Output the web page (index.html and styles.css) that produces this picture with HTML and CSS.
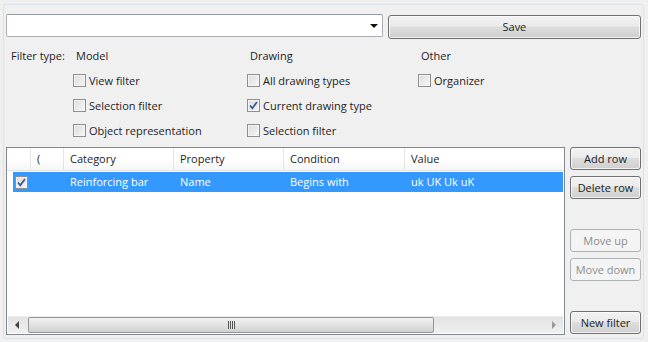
FILE: index.html
```html
<!DOCTYPE html>
<html>
<head>
<meta charset="utf-8">
<link rel="stylesheet" href="styles.css">
</head>
<body>
<div class="frame">
  <div class="toprow">
    <div class="combo"><span class="combo-arrow"></span></div>
    <button class="btn save">Save</button>
  </div>
  <div class="filters">
    <div class="lbl">Filter type:</div>
    <div class="hdr">Model</div>
    <div class="hdr">Drawing</div>
    <div class="hdr">Other</div>

    <div></div>
    <label class="chk"><span class="box"></span>View filter</label>
    <label class="chk"><span class="box"></span>All drawing types</label>
    <label class="chk"><span class="box"></span>Organizer</label>

    <div></div>
    <label class="chk"><span class="box"></span>Selection filter</label>
    <label class="chk"><span class="box checked"><svg viewBox="0 0 13 13" width="13" height="13"><path d="M3 6.5 L5.3 9.3 L10 3" fill="none" stroke="#3c5a9a" stroke-width="1.8"/></svg></span>Current drawing type</label>
    <div></div>

    <div></div>
    <label class="chk"><span class="box"></span>Object representation</label>
    <label class="chk"><span class="box"></span>Selection filter</label>
    <div></div>
  </div>
  <div class="main">
    <div class="table">
      <div class="thead">
        <div class="th c0"></div>
        <div class="th c1">(</div>
        <div class="th c2">Category</div>
        <div class="th c3">Property</div>
        <div class="th c4">Condition</div>
        <div class="th c5">Value</div>
      </div>
      <div class="tbody">
        <div class="row sel">
          <div class="td c0"><span class="box rowbox"><svg viewBox="0 0 13 13" width="13" height="13"><path d="M3 6.5 L5.3 9.3 L10 3" fill="none" stroke="#3c5a9a" stroke-width="1.8"/></svg></span></div>
          <div class="td c1"></div>
          <div class="td c2">Reinforcing bar</div>
          <div class="td c3">Name</div>
          <div class="td c4">Begins with</div>
          <div class="td c5">uk UK Uk uK</div>
        </div>
      </div>
      <div class="hscroll">
        <div class="sbtn"><svg width="5" height="8" viewBox="0 0 5 8"><path d="M4 0 L0 4 L4 8 Z" fill="#444"/></svg></div>
        <div class="track">
          <div class="thumb"><span class="grip"></span></div>
        </div>
        <div class="sbtn"><svg width="5" height="8" viewBox="0 0 5 8"><path d="M1 0 L5 4 L1 8 Z" fill="#999"/></svg></div>
      </div>
    </div>
    <div class="side">
      <button class="btn sbt add">Add row</button>
      <button class="btn sbt del">Delete row</button>
      <button class="btn sbt dis up">Move up</button>
      <button class="btn sbt dis down">Move down</button>
      <button class="btn sbt newf">New filter</button>
    </div>
  </div>
</div>
</body>
</html>
```
FILE: styles.css
```css
* { box-sizing: border-box; }
html, body { margin: 0; padding: 0; }
body {
  width: 648px; height: 342px; overflow: hidden;
  background: #f0f0f0;
  font-family: "Open Sans", "Noto Sans", sans-serif;
  font-size: 11px;
  color: #1e1e1e;
}
.frame {
  margin: 4px 4px 0 3px;
  height: 335px;
  border: 1px solid #d9e2e8;
  border-radius: 3px;
  padding: 9px 2px 0 2px;
}
.toprow { display: flex; gap: 5px; height: 24px; }
.combo {
  width: 378px; height: 23px;
  background: #fff;
  border: 1px solid #abadb3;
  border-top-color: #9a9ca3;
  border-radius: 2px;
  position: relative;
}
.combo-arrow {
  position: absolute; right: 4px; top: 9px;
  width: 0; height: 0;
  border-left: 4px solid transparent;
  border-right: 4px solid transparent;
  border-top: 4px solid #111;
}
.btn {
  font-family: inherit; font-size: inherit; color: #1e1e1e;
  border: 1px solid #707070;
  border-radius: 3px;
  background: linear-gradient(#f2f2f2 0%, #ebebeb 45%, #dddddd 50%, #cfcfcf 100%);
  padding: 0 0 1px 0; margin: 0;
  box-shadow: inset 0 0 0 1px rgba(255,255,255,0.7);
}
.save { width: 254px; height: 24px; margin-top: 1px; }
.filters {
  display: grid;
  grid-template-columns: 62px 174px 171px auto;
  grid-auto-rows: 25px;
  margin-top: 5px;
  padding-left: 5px;
  align-items: center;
}
.hdr { padding-left: 3px; }
.chk { display: flex; align-items: center; gap: 3px; }
.box {
  width: 13px; height: 13px; flex: none;
  border: 1px solid #8e8f8f;
  background: linear-gradient(135deg, #dcdcdc, #f6f6f6);
  box-shadow: inset 0 0 0 1px #f4f4f4;
  display: inline-flex; align-items: center; justify-content: center;
}
.box svg { display: block; margin: -1px; }
.main { display: flex; margin-top: 4px; gap: 5px; }
.table {
  width: 559px; height: 188px;
  background: #fff;
  border: 1px solid #828790;
  display: flex; flex-direction: column;
}
.thead { display: flex; height: 23px; border-bottom: 1px solid #e5e5e5; }
.th {
  border-right: 1px solid #e5e5e5;
  padding-left: 6px;
  line-height: 21px;
  background: linear-gradient(#ffffff 0%, #ffffff 50%, #f5f6f7 100%);
}
.c0 { width: 24px; }
.c1 { width: 33px; }
.c2 { width: 110px; }
.c3 { width: 110px; }
.c4 { width: 121px; }
.c5 { flex: 1; border-right: none; }
.tbody { flex: 1; }
.row { display: flex; height: 20px; margin-top: 1px; }
.row.sel { background: #3399ff; color: #fff; margin-left: 6px; margin-right: 1px; }
.row .c0 { width: 18px; }
.td { line-height: 19px; padding-left: 6px; }
.row .c0 { padding-left: 2px; display: flex; align-items: center; }
.hscroll {
  height: 17px; margin: 0 1px 1px 1px;
  display: flex;
  background: linear-gradient(#e3e3e3, #f0f0f0);
  border-top: 1px solid #ececec;
}
.sbtn { width: 19px; display: flex; align-items: center; justify-content: center; }
.track { flex: 1; padding: 0 0 0 1px; }
.thumb {
  width: 406px; height: 16px;
  border: 1px solid #969696;
  border-radius: 2px;
  background: linear-gradient(#f1f1f1, #e2e2e2 50%, #d0d0d0);
  display: flex; align-items: center; justify-content: center;
}
.grip {
  width: 7px; height: 8px;
  background: repeating-linear-gradient(90deg, #555 0 1px, #e8e8e8 1px 2px);
}
.side { width: 71px; display: flex; flex-direction: column; }
.sbt { height: 23px; width: 71px; }
.del { margin-top: 6px; }
.up { margin-top: 30px; }
.down { margin-top: 6px; }
.newf { margin-top: 30px; }
.dis {
  color: #8d8d8d;
  border-color: #adb2b5;
  background: #f4f4f4;
  box-shadow: none;
}
```
